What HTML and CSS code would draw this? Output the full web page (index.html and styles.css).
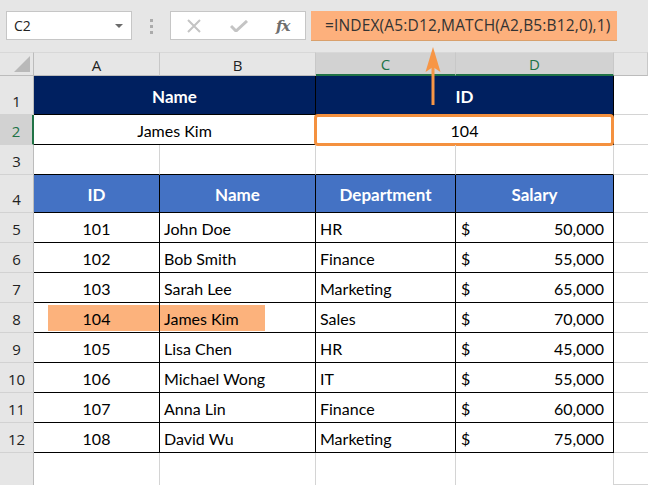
FILE: index.html
```html
<!DOCTYPE html>
<html>
<head>
<meta charset="utf-8">
<link rel="stylesheet" href="styles.css">
</head>
<body>
<div class="toolbar">
  <div class="namebox"><span>C2</span><span class="dd"></span></div>
  <div class="grip"><i></i><i></i><i></i></div>
  <div class="fxbox">
    <svg class="ico" width="16" height="14" viewBox="0 0 16 14"><path d="M2 1 L14 13 M14 1 L2 13" stroke="#c4c4c4" stroke-width="2" fill="none"/></svg>
    <svg class="ico" width="18" height="12" viewBox="0 0 18 12"><path d="M1 6 L6 11 L17 1" stroke="#c4c4c4" stroke-width="3" fill="none"/></svg>
    <span class="fx">fx</span>
  </div>
  <div class="formula">=INDEX(A5:D12,MATCH(A2,B5:B12,0),1)</div>
</div>
<div class="sheet">
  <div class="ch corner"><span class="tri"></span></div>
  <div class="ch">A</div>
  <div class="ch">B</div>
  <div class="ch sel">C</div>
  <div class="ch sel">D</div>
  <div class="ch"></div>

  <div class="rh">1</div>
  <div class="c navy span2">Name</div>
  <div class="c navy span2">ID</div>
  <div class="c e"></div>

  <div class="rh selr">2</div>
  <div class="c t span2 center">James Kim</div>
  <div class="c t span2 center result"><span class="ring"></span>104</div>
  <div class="c e"></div>

  <div class="rh">3</div>
  <div class="c tb"></div>
  <div class="c tb"></div>
  <div class="c tb"></div>
  <div class="c tb"></div>
  <div class="c e"></div>

  <div class="rh">4</div>
  <div class="c blue">ID</div>
  <div class="c blue">Name</div>
  <div class="c blue">Department</div>
  <div class="c blue">Salary</div>
  <div class="c e"></div>

  <div class="rh">5</div>
  <div class="c t center">101</div><div class="c t">John Doe</div><div class="c t">HR</div><div class="c t sal"><span>$</span><span>50,000</span></div><div class="c e"></div>
  <div class="rh">6</div>
  <div class="c t center">102</div><div class="c t">Bob Smith</div><div class="c t">Finance</div><div class="c t sal"><span>$</span><span>55,000</span></div><div class="c e"></div>
  <div class="rh">7</div>
  <div class="c t center">103</div><div class="c t">Sarah Lee</div><div class="c t">Marketing</div><div class="c t sal"><span>$</span><span>65,000</span></div><div class="c e"></div>
  <div class="rh">8</div>
  <div class="c t center"><span class="hl hl-a"></span><span class="txt">104</span></div><div class="c t"><span class="hl hl-b"></span><span class="txt">James Kim</span></div><div class="c t">Sales</div><div class="c t sal"><span>$</span><span>70,000</span></div><div class="c e"></div>
  <div class="rh">9</div>
  <div class="c t center">105</div><div class="c t">Lisa Chen</div><div class="c t">HR</div><div class="c t sal"><span>$</span><span>45,000</span></div><div class="c e"></div>
  <div class="rh">10</div>
  <div class="c t center">106</div><div class="c t">Michael Wong</div><div class="c t">IT</div><div class="c t sal"><span>$</span><span>55,000</span></div><div class="c e"></div>
  <div class="rh">11</div>
  <div class="c t center">107</div><div class="c t">Anna Lin</div><div class="c t">Finance</div><div class="c t sal"><span>$</span><span>60,000</span></div><div class="c e"></div>
  <div class="rh">12</div>
  <div class="c t center">108</div><div class="c t">David Wu</div><div class="c t">Marketing</div><div class="c t sal"><span>$</span><span>75,000</span></div><div class="c e"></div>

  <div class="rh last"></div>
  <div class="c g"></div><div class="c g"></div><div class="c g"></div><div class="c g"></div><div class="c e"></div>
</div>
<svg class="arrow" width="18" height="60" viewBox="0 0 18 60"><path d="M9 10 L9 58" stroke="#f79646" stroke-width="3"/><path d="M9 0 L16.5 25 L9 20 L1.5 25 Z" fill="#f79646"/></svg>
</body>
</html>
```

FILE: styles.css
```css
html, body { margin: 0; padding: 0; }
body {
  width: 648px;
  height: 485px;
  overflow: hidden;
  background: #fff;
  font-family: Lato, "Open Sans", sans-serif;
  position: relative;
}
.toolbar {
  height: 52px;
  background: #e6e6e6;
  display: flex;
  align-items: flex-start;
  padding: 11px 0 0 6px;
  box-sizing: border-box;
}
.namebox {
  width: 126px;
  height: 29px;
  box-sizing: border-box;
  background: #fff;
  border: 1px solid #c6c6c6;
  display: flex;
  align-items: center;
  justify-content: space-between;
  padding: 0 8px 0 7px;
  font-family: "Open Sans", sans-serif;
  font-size: 14px;
  color: #222;
}
.dd {
  width: 0; height: 0;
  border-left: 4px solid transparent;
  border-right: 4px solid transparent;
  border-top: 4px solid #6b6b6b;
}
.grip {
  width: 38px;
  display: flex;
  flex-direction: column;
  align-items: center;
  gap: 3px;
  padding-top: 8px;
}
.grip i { display: block; width: 3px; height: 3px; background: #ababab; }
.fxbox {
  width: 136px;
  height: 29px;
  box-sizing: border-box;
  background: #fff;
  border: 1px solid #c6c6c6;
  display: flex;
  align-items: center;
  padding-left: 15px;
  gap: 28px;
}
.fx {
  font-family: "DejaVu Serif", serif;
  font-style: italic;
  font-weight: bold;
  font-size: 15px;
  color: #6e6e6e;
  letter-spacing: -1px;
}
.formula {
  margin-left: 5px;
  width: 306px;
  height: 30px;
  box-sizing: border-box;
  background: #fdb07c;
  border-bottom: 1px solid #d9a06c;
  font-family: "Open Sans", sans-serif;
  font-size: 15.5px;
  color: #333;
  padding: 3px 0 0 14px;
  white-space: nowrap;
  letter-spacing: 0.15px;
}
.sheet {
  display: grid;
  grid-template-columns: 34px 126px 156px 140px 158px 34px;
  grid-template-rows: 24px 39px 30px 30px 38px repeat(8, 30px) 32px;
}
.ch {
  background: #e6e6e6;
  border-right: 1px solid #c8c8c8;
  border-bottom: 1px solid #bcbcbc;
  display: flex;
  align-items: center;
  justify-content: center;
  font-family: "Open Sans", sans-serif;
  font-size: 15px;
  color: #222;
  border-top: 1px solid #d8d8d8;
  padding-top: 1px;
  box-sizing: border-box;
}
.ch.sel {
  background: #d2d2d2;
  color: #217346;
  border-bottom: 2px solid #217346;
}
.corner { position: relative; border-right: 1px solid #bcbcbc; }
.tri {
  position: absolute;
  right: 3px; bottom: 3px;
  width: 0; height: 0;
  border-left: 16px solid transparent;
  border-bottom: 16px solid #b9b9b9;
}
.rh {
  background: #e6e6e6;
  border-right: 1px solid #bcbcbc;
  border-bottom: 1px solid #d2d2d2;
  display: flex;
  align-items: flex-end;
  justify-content: center;
  padding-bottom: 3px;
  box-sizing: border-box;
  font-family: "Open Sans", sans-serif;
  font-size: 15px;
  color: #222;
}
.rh.selr {
  background: #d2d2d2;
  color: #217346;
  border-right: 2px solid #217346;
}
.rh.last { border-bottom: none; }
.c {
  box-sizing: border-box;
  display: flex;
  align-items: center;
  font-size: 16px;
  color: #000;
  white-space: nowrap;
  position: relative;
  padding-top: 2px;
}
.span2 { grid-column: span 2; }
.navy {
  background: #002060;
  color: #fff;
  font-weight: bold;
  font-size: 17px;
  justify-content: center;
  border-right: 1px solid #000;
  border-bottom: 1px solid #000;
}
.t {
  border-right: 1px solid #000;
  border-bottom: 1px solid #000;
  padding-left: 4px;
}
.center { justify-content: center; padding-left: 0; }
.tb {
  border-right: 1px solid #d4d4d4;
  border-bottom: 1px solid #000;
}
.blue {
  background: #4472c4;
  color: #fff;
  font-weight: bold;
  font-size: 17px;
  justify-content: center;
  border-right: 1px solid #000;
  border-bottom: 1px solid #000;
}
.e { border-bottom: 1px solid #d4d4d4; }
.g { border-right: 1px solid #d4d4d4; }
.sal {
  justify-content: space-between;
  padding: 2px 9px 0 5px;
}
.result { justify-content: center; }
.ring {
  position: absolute;
  left: -2px; right: -1px; top: -1px; bottom: -2px;
  border: 3px solid #f4913f;
  border-radius: 4px;
}
.hl {
  position: absolute;
  top: 2px; bottom: 1px;
  background: #fcb27c;
}
.hl-a { left: 14px; right: 0; }
.hl-b { left: 0; width: 105px; }
.txt { position: relative; }
.arrow {
  position: absolute;
  left: 424px;
  top: 47px;
}
```
